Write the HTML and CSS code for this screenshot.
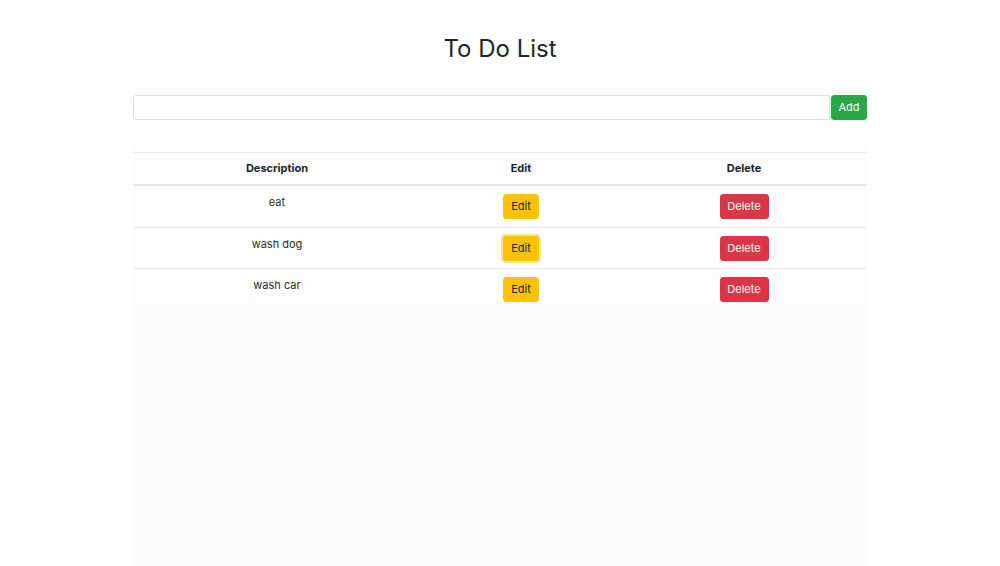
FILE: index.html
```html
<!DOCTYPE html>
<html lang="en">
<head>
<meta charset="utf-8">
<title>To Do List</title>
<link rel="stylesheet" href="styles.css">
</head>
<body>
<div class="page">
  <h1 class="title">To Do List</h1>
  <div class="panel">
    <form class="add-form">
      <input class="add-input" type="text">
      <button type="button" class="btn btn-add">Add</button>
    </form>
    <table class="todo-table">
      <colgroup>
        <col class="col-desc">
        <col class="col-edit">
        <col class="col-del">
      </colgroup>
      <thead>
        <tr><th>Description</th><th>Edit</th><th>Delete</th></tr>
      </thead>
      <tbody>
        <tr><td>eat</td><td><button class="btn btn-edit">Edit</button></td><td><button class="btn btn-delete">Delete</button></td></tr>
        <tr><td>wash dog</td><td><button class="btn btn-edit is-focus">Edit</button></td><td><button class="btn btn-delete">Delete</button></td></tr>
        <tr><td>wash car</td><td><button class="btn btn-edit">Edit</button></td><td><button class="btn btn-delete">Delete</button></td></tr>
      </tbody>
    </table>
  </div>
</div>
</body>
</html>
```

FILE: styles.css
```css
html, body {
  margin: 0;
  padding: 0;
  background: #ffffff;
}
body {
  font-family: Inter, "Liberation Sans", Arial, sans-serif;
  color: #212529;
  height: 566px;
  overflow: hidden;
}
.page {
  width: 734px;
  margin: 0 auto;
  display: flex;
  flex-direction: column;
  height: 566px;
}
.title {
  margin: 34px 0 0;
  font-size: 24px;
  font-weight: 400;
  line-height: 29px;
  text-align: center;
  color: #222528;
}
.panel {
  flex: 1;
  background: linear-gradient(#ffffff, #fdfdfd 90px, #fcfcfc);
  padding-top: 32px;
}
.add-form {
  display: flex;
  margin: 0;
  height: 25px;
}
.add-input {
  flex: 1;
  margin: 0;
  height: 25px;
  box-sizing: border-box;
  border: 1px solid #dcdfe2;
  border-radius: 3px 0 0 3px;
  background: #ffffff;
  padding: 0 8px;
  font: inherit;
}
.btn {
  font-family: inherit;
  font-size: 11px;
  line-height: 15px;
  border: 1px solid transparent;
  border-radius: 3px;
  padding: 4px 8px;
  height: 25px;
  box-sizing: border-box;
  cursor: pointer;
}
.btn-add {
  background: #28a745;
  border-color: #28a745;
  color: #ffffff;
  width: 36px;
  padding: 4px 0;
  margin-left: 1px;
}
.todo-table {
  width: 100%;
  margin-top: 32px;
  border-collapse: collapse;
  table-layout: fixed;
  font-size: 11px;
}
.col-desc { width: 288px; }
.col-edit { width: 200px; }
.col-del { width: 246px; }
.todo-table th,
.todo-table td {
  padding: 8px 8px 7.5px;
  text-align: center;
  vertical-align: top;
  line-height: 16px;
  border-top: 1px solid #e8eaec;
}
.todo-table td {
  color: #2b2f33;
}
.todo-table th {
  padding: 8px;
  line-height: 15px;
  font-weight: 700;
  border-bottom: 2px solid #e3e5e7;
}
.todo-table tbody tr:first-child td {
  border-top: none;
}
.btn-edit {
  background: #ffc107;
  border-color: #ffc107;
  color: #212529;
  width: 36px;
  padding: 4px 0;
}
.btn-edit.is-focus {
  box-shadow: 0 0 0 2px rgba(222, 170, 12, 0.35);
}
.btn-delete {
  background: #dc3545;
  border-color: #dc3545;
  color: #ffffff;
  width: 49px;
  padding: 4px 0;
}
```
